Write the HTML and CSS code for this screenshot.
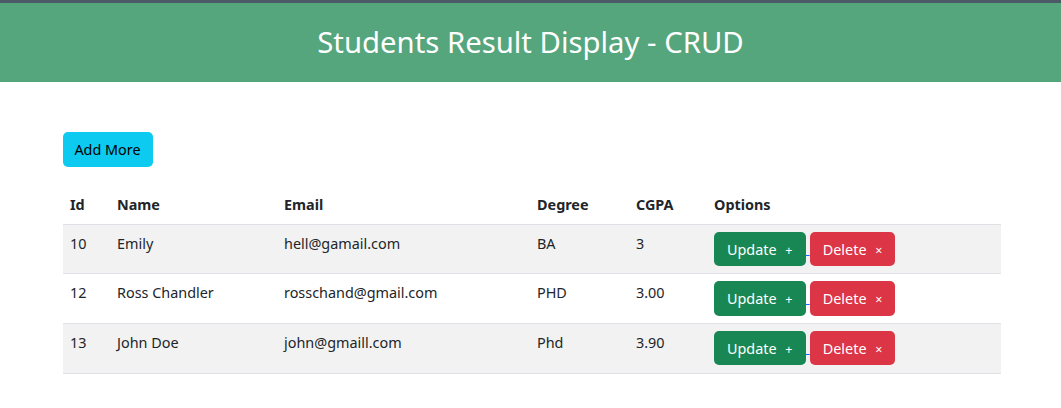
FILE: index.html
```html
<!DOCTYPE html>
<html lang="en">
<head>
<meta charset="utf-8">
<title>Students Result Display - CRUD</title>
<link rel="stylesheet" href="styles.css">
</head>
<body>
<div class="topline"></div>
<header class="banner">
  <h1 class="title">Students Result Display - CRUD</h1>
</header>
<main class="container">
  <button class="btn btn-info">Add More</button>
  <table class="table">
    <thead>
      <tr>
        <th class="c-id">Id</th>
        <th class="c-name">Name</th>
        <th class="c-email">Email</th>
        <th class="c-degree">Degree</th>
        <th class="c-cgpa">CGPA</th>
        <th class="c-opt">Options</th>
      </tr>
    </thead>
    <tbody>
      <tr class="odd">
        <td>10</td><td>Emily</td><td>hell@gamail.com</td><td>BA</td><td>3</td>
        <td class="opts"><a class="link" href="#"><span class="btn btn-success">Update <span class="ico">+</span></span> </a><span class="btn btn-danger">Delete <span class="ico">×</span></span></td>
      </tr>
      <tr>
        <td>12</td><td>Ross Chandler</td><td>rosschand@gmail.com</td><td>PHD</td><td>3.00</td>
        <td class="opts"><a class="link" href="#"><span class="btn btn-success">Update <span class="ico">+</span></span> </a><span class="btn btn-danger">Delete <span class="ico">×</span></span></td>
      </tr>
      <tr class="odd">
        <td>13</td><td>John Doe</td><td>john@gmaill.com</td><td>Phd</td><td>3.90</td>
        <td class="opts"><a class="link" href="#"><span class="btn btn-success">Update <span class="ico">+</span></span> </a><span class="btn btn-danger">Delete <span class="ico">×</span></span></td>
      </tr>
    </tbody>
  </table>
</main>
</body>
</html>
```
FILE: styles.css
```css
* { box-sizing: border-box; }
body {
  margin: 0;
  font-family: "Noto Sans", "Open Sans", sans-serif;
  font-size: 14.4px;
  line-height: 1.5;
  color: #212529;
  background: #fff;
}
.topline {
  height: 3px;
  background: #4a5a66;
}
.banner {
  background: #55a57d;
  height: 79px;
  display: flex;
  align-items: center;
  justify-content: center;
}
.title {
  margin: 0;
  color: #fff;
  font-size: 29.3px;
  font-weight: 400;
  line-height: 1.2;
}
.container {
  width: 938px;
  margin: 50px auto 0;
  padding: 0;
  position: relative;
  left: 1px;
}
.btn {
  display: inline-block;
  font-family: inherit;
  font-size: 14.4px;
  line-height: 21px;
  border: 1px solid transparent;
  border-radius: 5px;
  cursor: pointer;
  vertical-align: top;
  text-align: center;
}
.btn-info {
  background: #0dcaf0;
  color: #000;
  width: 90px;
  height: 35px;
  padding: 5px 0;
  margin-bottom: 19px;
}
.btn-success, .btn-danger {
  color: #fff;
  height: 34.5px;
  padding: 6px 0 6px 12px;
  text-align: left;
}
.btn-success { background: #198754; width: 92px; }
.btn-danger { background: #dc3545; width: 85px; }
.ico { font-size: 12.5px; margin-left: 5px; }
.link { color: #0d6efd; text-decoration: underline; }
.table {
  width: 938px;
  border-collapse: collapse;
  margin: 0;
}
.table th, .table td {
  text-align: left;
  vertical-align: top;
  padding: 8px 7.5px;
  border-bottom: 1px solid #dee2e6;
}
.table th { font-weight: 700; padding-bottom: 8px; }
.table td.opts { line-height: 34.5px; padding: 7px 7.5px 7.2px; }
.table tr.odd td { background: #f2f2f2; }
.c-id { width: 47px; }
.c-name { width: 167px; }
.c-email { width: 253px; }
.c-degree { width: 99px; }
.c-cgpa { width: 78px; }
.c-opt { width: 294px; }
```
